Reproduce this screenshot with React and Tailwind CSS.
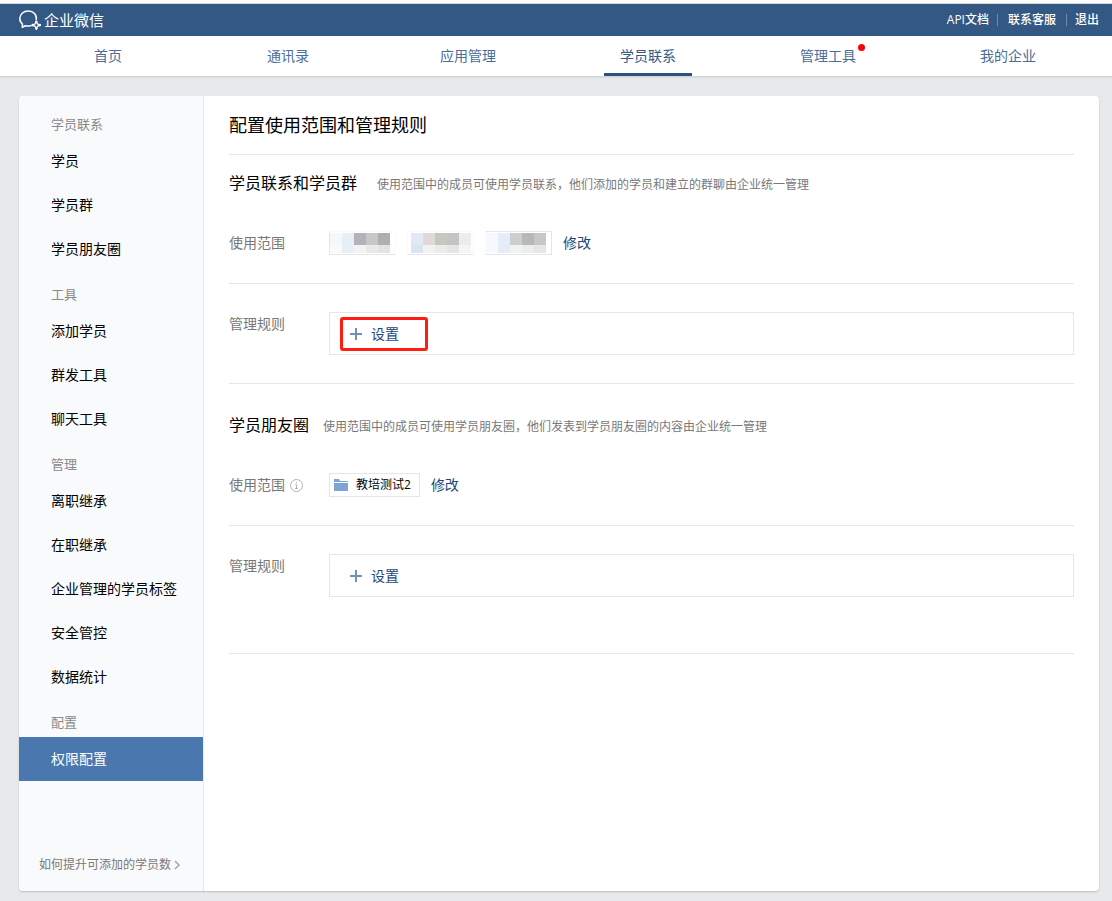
import React from "react";

const tabs = [
  { name: "首页" },
  { name: "通讯录" },
  { name: "应用管理" },
  { name: "学员联系", active: true },
  { name: "管理工具", dot: true },
  { name: "我的企业" },
];

const menu = [
  { title: "学员联系", items: ["学员", "学员群", "学员朋友圈"] },
  { title: "工具", items: ["添加学员", "群发工具", "聊天工具"] },
  {
    title: "管理",
    items: ["离职继承", "在职继承", "企业管理的学员标签", "安全管控", "数据统计"],
  },
  { title: "配置", items: ["权限配置"] },
];

const activeItem = "权限配置";

// colours of the masked member names, two rows for each member
const masks = [
  {
    top: ["#f4f7fb", "#e6eef7", "#b4b2b9", "#c7c8c3", "#afaeb1"],
    bottom: ["#f8fafc", "#e8eff7", "#f3f3f4", "#e9e9e8", "#e3e3e4"],
    box: "justify-start border-t-[#fafafa] border-r-[#fafafa]",
  },
  {
    top: ["#e0e9f5", "#dfd9dc", "#c6c7c1", "#c4c4c5", "#ececed"],
    bottom: ["#d9e5f2", "#f3f2f2", "#ebebe9", "#e5e5e5", "#f5f5f6"],
    box: "justify-center border-x-[#fafafa] border-t-[#fafafa]",
  },
  {
    top: ["#f5f8fc", "#e6edf8", "#cdcecf", "#b7b8ba", "#c9c6ca"],
    bottom: ["#f8f9fc", "#e5ecf6", "#f0f1f1", "#eceded", "#e6e6e7"],
    box: "justify-start border-l-[#fafafa]",
  },
];

function Logo() {
  return (
    <svg width="24" height="22" viewBox="0 0 24 22" fill="none" stroke="#fff" strokeWidth="1.5">
      <path
        d="M18.300 10.500C19 5.600 15.400 2 10.400 2 5.400 2 1.800 5.300 1.800 9.600c0 2.300 1 4.200 2.700 5.500L4.200 18.200l3.200-1.500c2 .5 4 .5 5.800-.1"
        strokeLinecap="round"
        strokeLinejoin="round"
      />
      <path
        d="M18.300 12.700l1.200 2.200 2.300 1.200-2.300 1.200-1.200 2.300-1.200-2.300-2.300-1.200 2.300-1.200z"
        strokeWidth="1.300"
        strokeLinejoin="round"
      />
      <g fill="#fff" stroke="none">
        <circle cx="18.300" cy="12.700" r="1.300" />
        <circle cx="21.800" cy="16.100" r="1.300" />
        <circle cx="18.300" cy="19.600" r="1.300" />
        <circle cx="14.800" cy="16.100" r="1.300" />
      </g>
    </svg>
  );
}

function Plus() {
  return (
    <svg width="12" height="12" viewBox="0 0 12 12" stroke="#7390b5" strokeWidth="2">
      <path d="M6 0v12M0 6h12" />
    </svg>
  );
}

function Folder() {
  return (
    <svg width="14" height="12" viewBox="0 0 14 12" fill="#7ea4d3">
      <path d="M0 0h5l1 2h8v1H0zM0 4h14v8H0z" />
    </svg>
  );
}

function Info() {
  return (
    <svg width="13" height="13" viewBox="0 0 13 13" fill="none" stroke="#b2b2b2">
      <circle cx="6.5" cy="6.5" r="6" />
      <path d="M6.500 3v1.200M5.200 5.500h1.300v4M5 9.500h3" />
    </svg>
  );
}

function Header() {
  return (
    <header>
      <div className="flex h-[33px] items-center justify-between border-t border-[#d5d8dc] bg-[#335883] pl-[18px] pr-[13px] text-white">
        <a href="#" className="flex items-center gap-[2px] text-[15px] leading-5">
          <Logo />
          企业微信
        </a>
        <div className="flex items-center text-xs font-medium">
          <a href="#">API文档</a>
          <span className="mx-2 h-3 w-px bg-[#6f8bab]"></span>
          <a href="#" className="px-[2px]">联系客服</a>
          <span className="mx-2 h-3 w-px bg-[#6f8bab]"></span>
          <a href="#">退出</a>
        </div>
      </div>

      <nav className="grid h-10 grid-cols-6 bg-white pl-[18px] pr-[14px] shadow-[0_1px_2px_rgba(0,0,0,0.14)]">
        {tabs.map((tab) => (
          <a
            key={tab.name}
            href="#"
            className="flex justify-center text-sm leading-10 text-[#4a6d98]"
          >
            <span
              className={
                tab.active
                  ? "h-10 border-b-[3px] border-[#2c5280] px-4 text-[#345a88]"
                  : "relative px-4"
              }
            >
              {tab.name}
              {tab.dot && (
                <i className="absolute right-[7px] top-2 size-[7px] rounded-full bg-[#f00]"></i>
              )}
            </span>
          </a>
        ))}
      </nav>
    </header>
  );
}

function Sidebar() {
  return (
    <aside className="flex w-[185px] shrink-0 flex-col rounded-l border-r border-dotted border-[#d9dadc] bg-[#f9fafc] pt-[5px]">
      {menu.map((group) => (
        <div key={group.title}>
          <h3 className="px-8 pb-[5px] pt-[13px] text-[13px] leading-5 text-[#8a8a8a]">
            {group.title}
          </h3>
          {group.items.map((item) => (
            <a
              key={item}
              href="#"
              className={
                item === activeItem
                  ? "block bg-[#4a77ad] pl-8 pr-4 text-sm leading-[44px] text-white"
                  : "block pl-8 pr-4 text-sm leading-[44px] text-black"
              }
            >
              {item}
            </a>
          ))}
        </div>
      ))}

      <a href="#" className="mt-auto flex items-center gap-[3px] pb-4 pl-5 text-xs leading-5 text-[#787878]">
        如何提升可添加的学员数
        <svg width="7" height="10" viewBox="0 0 7 10" fill="none" stroke="#aaa" strokeWidth="1.6">
          <path d="M1 1l4 4-4 4" />
        </svg>
      </a>
    </aside>
  );
}

function SectionHeading({ title, desc, className }) {
  return (
    <div className={className}>
      <h2 className="text-base leading-6 text-black">{title}</h2>
      <p className="text-xs leading-5 text-[#787878]">{desc}</p>
    </div>
  );
}

function Row({ label, info, children }) {
  return (
    <div className="flex">
      <div className="flex w-[100px] shrink-0 items-center gap-[5px] self-start text-sm leading-6 text-[#787878]">
        {label}
        {info && <Info />}
      </div>
      {children}
    </div>
  );
}

function RuleBox({ highlight }) {
  return (
    <div className="flex h-[43px] flex-1 items-center border border-[#e4e6e9] px-[10px]">
      <button
        type="button"
        className={
          highlight
            ? "flex h-[34px] w-[88px] items-center gap-[9px] rounded-[3px] border-3 border-[#ff1d12] pl-[7px] text-sm text-[#1d4877]"
            : "flex h-[34px] w-[88px] items-center gap-[9px] pl-[10px] text-sm text-[#1d4877]"
        }
      >
        <Plus />
        设置
      </button>
    </div>
  );
}

function EditButton() {
  return (
    <button type="button" className="ml-[11px] text-sm leading-6 text-[#1d4877]">
      修改
    </button>
  );
}

function Mask({ top, bottom, box }) {
  return (
    <div className={`flex h-6 w-[67px] border border-[#e4e6e9] bg-white pt-px ${box}`}>
      <div>
        <div className="flex h-3">
          {top.map((c, i) => (
            <span key={i} className="w-3" style={{ backgroundColor: c }}></span>
          ))}
        </div>
        <div className="flex h-2">
          {bottom.map((c, i) => (
            <span key={i} className="w-3" style={{ backgroundColor: c }}></span>
          ))}
        </div>
      </div>
    </div>
  );
}

function App() {
  return (
    <div className="flex min-h-screen flex-col border-t-3 border-[#fdfdfd] bg-[#e8e9eb] font-['Open_Sans','Noto_Sans_CJK_SC',sans-serif]">
      <Header />

      <div className="flex flex-1 pb-[10px] pl-[19px] pr-[13px] pt-5">
        <div className="flex flex-1 rounded bg-white shadow-[0_1px_2px_rgba(0,0,0,0.2)]">
          <Sidebar />

          <main className="flex-1 px-[25px]">
            <h1 className="border-b border-[#e4e6e9] py-[15px] text-lg leading-7 text-black">
              配置使用范围和管理规则
            </h1>

            <section>
              <SectionHeading
                title="学员联系和学员群"
                desc="使用范围中的成员可使用学员联系，他们添加的学员和建立的群聊由企业统一管理"
                className="flex items-baseline gap-5 pb-9 pt-4"
              />
              <div className="border-b border-[#e4e6e9] pb-7">
                <Row label="使用范围">
                  <div className="flex gap-[11px]">
                    {masks.map((mask, i) => (
                      <Mask key={i} {...mask} />
                    ))}
                  </div>
                  <EditButton />
                </Row>
              </div>
              <div className="border-b border-[#e4e6e9] py-7">
                <Row label="管理规则">
                  <RuleBox highlight />
                </Row>
              </div>
            </section>

            <section>
              <SectionHeading
                title="学员朋友圈"
                desc="使用范围中的成员可使用学员朋友圈，他们发表到学员朋友圈的内容由企业统一管理"
                className="flex items-baseline gap-[14px] pb-9 pt-[29px]"
              />
              <div className="border-b border-[#e4e6e9] pb-7">
                <Row label="使用范围" info>
                  <div className="flex h-6 items-center gap-2 border border-[#e4e6e9] pl-1 pr-2 text-xs text-black">
                    <Folder />
                    教培测试2
                  </div>
                  <EditButton />
                </Row>
              </div>
              <div className="border-b border-[#e4e6e9] pb-14 pt-7">
                <Row label="管理规则">
                  <RuleBox />
                </Row>
              </div>
            </section>
          </main>
        </div>
      </div>
    </div>
  );
}

export default App;
